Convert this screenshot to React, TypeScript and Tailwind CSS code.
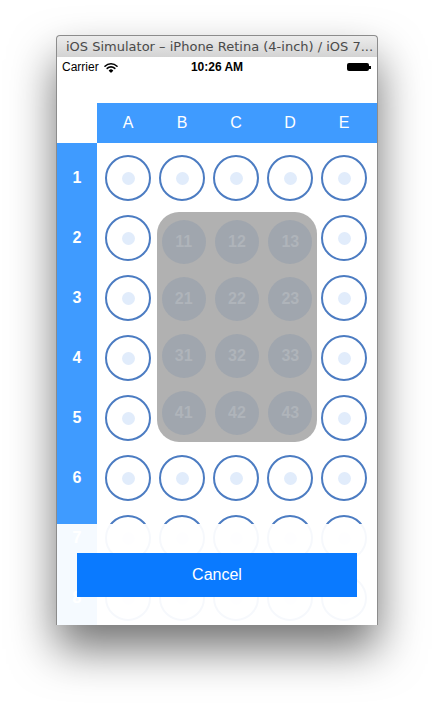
import React from "react";

const cols = ["A", "B", "C", "D", "E"];
const rows = [1, 2, 3, 4, 5, 6, 7, 8];

// ─── Status bar icons ─────────────────────────────────────────────────────────

function Wifi() {
  return (
    <svg width="14" height="11" viewBox="0 0 14 11">
      <path d="M1 4.2a8.5 8.5 0 0 1 12 0" stroke="#000" strokeWidth="1.6" fill="none" strokeLinecap="round" />
      <path d="M3.2 6.4a5.4 5.4 0 0 1 7.6 0" stroke="#000" strokeWidth="1.6" fill="none" strokeLinecap="round" />
      <path d="M5.4 8.6a2.3 2.3 0 0 1 3.2 0L7 10.2z" fill="#000" stroke="#000" strokeWidth="1.2" strokeLinejoin="round" />
    </svg>
  );
}

function Battery() {
  return (
    <div className="flex items-center">
      <div className="h-[8px] w-[22px] rounded-[2px] bg-black" />
      <div className="h-[3px] w-[2px] bg-black" />
    </div>
  );
}

// ─── Well cell ────────────────────────────────────────────────────────────────

function Well() {
  return (
    <div className="flex h-[60px] items-center justify-center">
      <div className="flex h-[46px] w-[46px] items-center justify-center rounded-full border-2 border-[#4c7cc2]">
        <div className="h-[13px] w-[13px] rounded-full bg-[#e1ecfb]" />
      </div>
    </div>
  );
}

export default function App() {
  return (
    <div className="h-[704px] w-[434px] overflow-hidden bg-white pl-[56px] pt-[35px]" style={{ fontFamily: '"Liberation Sans", Arial, sans-serif' }}>
      <div className="w-[322px] rounded-t-[4px] shadow-[0_24px_45px_rgba(0,0,0,0.55)]">
        {/* Title bar */}
        <div className="flex h-[22px] items-center overflow-hidden whitespace-nowrap rounded-t-[4px] border border-b-0 border-[#8c8c8c] bg-gradient-to-b from-[#ececec] to-[#d3d3d3] pl-[9px] text-[13px] leading-none text-[#4a4a4a]" style={{ fontFamily: '"DejaVu Sans", sans-serif' }}>
          iOS Simulator – iPhone Retina (4-inch) / iOS 7...
        </div>

        {/* Screen */}
        <div className="relative h-[568px] overflow-hidden border-x border-[#8c8c8c] bg-white">
          {/* Status bar */}
          <div className="flex h-[20px] items-center px-[5px] text-[12px] text-black">
            <div className="flex w-[120px] items-center gap-[5px]">
              <span>Carrier</span>
              <Wifi />
            </div>
            <div className="flex-1 text-center font-bold">10:26 AM</div>
            <div className="flex w-[120px] justify-end pr-[1px]">
              <Battery />
            </div>
          </div>

          <div className="h-[26px]" />

          {/* Column header */}
          <div className="flex h-[40px]">
            <div className="w-[40px]" />
            <div className="grid flex-1 grid-cols-5 bg-[#3f9bff] pl-[4px] pr-[6px] text-[16px] text-white">
              {cols.map((c) => (
                <div key={c} className="flex items-center justify-center">
                  {c}
                </div>
              ))}
            </div>
          </div>

          {/* Body */}
          <div className="flex">
            <div className="w-[40px] bg-[#3f9bff] pt-[5px] pb-[40px]">
              {rows.map((r) => (
                <div key={r} className="flex h-[60px] items-center justify-center text-[16px] font-bold text-white">
                  {r}
                </div>
              ))}
            </div>
            <div className="relative flex-1 pl-[4px] pr-[6px] pt-[5px]">
              {rows.map((r) => (
                <div key={r} className="grid grid-cols-5">
                  {cols.map((c) => (
                    <Well key={c} />
                  ))}
                </div>
              ))}

              {/* Selection overlay */}
              <div className="absolute left-[60px] top-[69px] grid h-[230px] w-[160px] grid-cols-3 rounded-[22px] bg-[#b1b1b1] py-[1px]">
                {[1, 2, 3, 4].map((r) =>
                  [1, 2, 3].map((c) => (
                    <div key={`${r}${c}`} className="flex h-[57px] items-center justify-center">
                      <div className="flex h-[44px] w-[44px] items-center justify-center rounded-full bg-[#a0a6ae] text-[16px] font-bold text-[#afb4ba]">
                        {r}
                        {c}
                      </div>
                    </div>
                  ))
                )}
              </div>
            </div>
          </div>

          {/* Fade + cancel */}
          <div className="absolute inset-x-0 bottom-0 top-[467px] bg-white/95" />
          <button className="absolute left-[20px] top-[496px] h-[44px] w-[280px] bg-[#0a7aff] text-[16px] text-white">
            Cancel
          </button>
        </div>
      </div>
    </div>
  );
}
